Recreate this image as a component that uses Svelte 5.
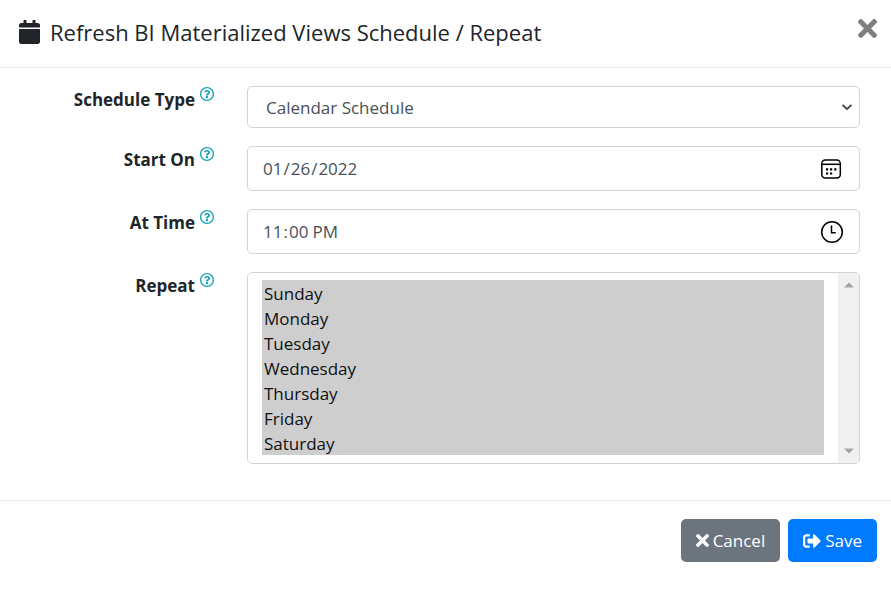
<script>
  const days = ['Sunday', 'Monday', 'Tuesday', 'Wednesday', 'Thursday', 'Friday', 'Saturday'];
  let scheduleType = $state('calendar');
  let startOn = $state('2022-01-26');
  let atTime = $state('23:00');
  let repeat = $state([...days]);
</script>

{#snippet help(topic)}
  <button type="button" class="help" aria-label={topic}>
    <svg viewBox="8 8 496 496" aria-hidden="true"><path d="M256 8C119.043 8 8 119.083 8 256c0 136.997 111.043 248 248 248s248-111.003 248-248C504 119.083 392.957 8 256 8zm0 448c-110.532 0-200-89.431-200-200 0-110.495 89.472-200 200-200 110.491 0 200 89.471 200 200 0 110.53-89.431 200-200 200zm107.244-255.2c0 67.052-72.421 68.084-72.421 92.863V300c0 6.627-5.373 12-12 12h-45.647c-6.627 0-12-5.373-12-12v-8.659c0-35.745 27.1-50.034 47.579-61.516 17.561-9.845 28.324-16.541 28.324-29.579 0-17.246-21.999-28.693-39.784-28.693-23.189 0-33.894 10.977-48.942 29.969-4.057 5.12-11.46 6.071-16.666 2.124l-27.824-21.098c-5.107-3.872-6.251-11.066-2.644-16.363C184.846 131.491 214.94 112 261.794 112c49.071 0 101.45 38.304 101.45 88.8zM298 368c0 23.159-18.841 42-42 42s-42-18.841-42-42 18.841-42 42-42 42 18.841 42 42z" /></svg>
  </button>
{/snippet}

{#snippet times()}
  <svg viewBox="0 80 352 352" aria-hidden="true"><path d="M242.72 256l100.07-100.07c12.28-12.28 12.28-32.19 0-44.48l-22.24-22.24c-12.28-12.28-32.19-12.28-44.48 0L176 189.28 75.93 89.21c-12.28-12.28-32.19-12.28-44.48 0L9.21 111.45c-12.28 12.28-12.28 32.19 0 44.48L109.28 256 9.21 356.07c-12.28 12.28-12.28 32.19 0 44.48l22.24 22.24c12.28 12.28 32.2 12.28 44.48 0L176 322.72l100.07 100.07c12.28 12.28 32.2 12.28 44.48 0l22.24-22.24c12.28-12.28 12.28-32.19 0-44.48L242.72 256z" /></svg>
{/snippet}

<form class="dialog" onsubmit={(e) => e.preventDefault()}>
  <header>
    <svg class="calendar" viewBox="0 0 448 512" aria-hidden="true"><path d="M12 192h424c6.6 0 12 5.4 12 12v260c0 26.5-21.5 48-48 48H48c-26.5 0-48-21.5-48-48V204c0-6.6 5.4-12 12-12zm436-44v-36c0-26.5-21.5-48-48-48h-48V12c0-6.6-5.4-12-12-12h-40c-6.6 0-12 5.4-12 12v52H160V12c0-6.6-5.4-12-12-12h-40c-6.6 0-12 5.4-12 12v52H48C21.5 64 0 85.5 0 112v36c0 6.6 5.4 12 12 12h424c6.6 0 12-5.4 12-12z" /></svg>
    <h1>Refresh BI Materialized Views Schedule / Repeat</h1>
    <button type="button" class="close" aria-label="Close">{@render times()}</button>
  </header>

  <div class="body">
    <div class="row">
      <div class="caption"><label for="type">Schedule Type</label>{@render help('About schedule type')}</div>
      <div class="field">
        <select id="type" class="control" bind:value={scheduleType}>
          <option value="calendar">Calendar Schedule</option>
        </select>
        <svg class="chevron" viewBox="0 0 12 8" aria-hidden="true"><path d="M1.5 2 6 6l4.500-4" /></svg>
      </div>
    </div>

    <div class="row">
      <div class="caption"><label for="start">Start On</label>{@render help('About start date')}</div>
      <div class="field">
        <input id="start" class="control" type="date" bind:value={startOn} />
        <svg class="picker" viewBox="0 0 24 24" aria-hidden="true">
          <rect x="1.800" y="3" width="18.500" height="18" rx="3.500" />
          <path d="M2 7.300h18" />
          <path class="dots" d="M6 11.300h2.200v2.200H6zM10 11.300h2.200v2.200H10zM14.200 11.300h2.200v2.200h-2.200zM6 15.400h2.200v2.200H6zM10 15.400h2.200v2.200H10z" />
        </svg>
      </div>
    </div>

    <div class="row">
      <div class="caption"><label for="time">At Time</label>{@render help('About time')}</div>
      <div class="field">
        <input id="time" class="control" type="time" bind:value={atTime} />
        <svg class="picker" viewBox="0 0 24 24" aria-hidden="true">
          <circle cx="12" cy="12" r="10.300" />
          <path d="M11.500 5.500v7.300h4.300" />
        </svg>
      </div>
    </div>

    <div class="row">
      <div class="caption"><label for="repeat">Repeat</label>{@render help('About repeat days')}</div>
      <div class="list">
        <select id="repeat" multiple size="7" bind:value={repeat}>
          {#each days as day}
            <option value={day}>{day}</option>
          {/each}
        </select>
        <div class="scrollbar" aria-hidden="true">
          <svg viewBox="0 0 10 6"><path d="M0 5.500 5 .5l5 5z" /></svg>
          <svg viewBox="0 0 10 6"><path d="M0 .5l5 5 5-5z" /></svg>
        </div>
      </div>
    </div>
  </div>

  <footer>
    <button type="button" class="btn cancel">{@render times()}Cancel</button>
    <button type="submit" class="btn save">
      <svg viewBox="0 0 512 512" aria-hidden="true"><path d="M497 273L329 441c-15 15-41 4.500-41-17v-96H152c-13.300 0-24-10.700-24-24v-96c0-13.300 10.700-24 24-24h136V88c0-21.400 25.900-32 41-17l168 168c9.300 9.400 9.300 24.600 0 34zM192 436v-40c0-6.600-5.400-12-12-12H96c-17.700 0-32-14.300-32-32V160c0-17.700 14.300-32 32-32h84c6.600 0 12-5.400 12-12V76c0-6.600-5.400-12-12-12H96c-53 0-96 43-96 96v192c0 53 43 96 96 96h84c6.600 0 12-5.400 12-12z" /></svg>Save
    </button>
  </footer>
</form>

<style>
  :global(body) {
    background: #fff;
  }
  .dialog,
  .dialog * {
    box-sizing: border-box;
  }
  .dialog {
    color: #212529;
    font-family: 'Segoe UI', 'Open Sans', 'Noto Sans', sans-serif;
    font-size: 17px;
    line-height: 27px;
  }
  svg {
    display: block;
    flex: none;
    fill: currentColor;
  }
  button,
  input,
  select {
    margin: 0;
    font: inherit;
  }
  header {
    display: flex;
    align-items: flex-start;
    padding: 16px 14px 18px 19px;
    border-bottom: 1px solid #e5e7e9;
  }
  .calendar {
    width: 21px;
    height: 24px;
    margin: 4px 10px 0 0;
  }
  h1 {
    flex: 1;
    margin: 0;
    font-size: 22px;
    font-weight: 500;
    line-height: 33px;
  }
  .close {
    padding: 3px 0;
    border: 0;
    background: none;
    color: #7f7f7f;
  }
  .close svg {
    width: 19px;
    height: 19px;
  }
  .body {
    display: flex;
    flex-direction: column;
    gap: 18px;
    padding: 18px 31px 36px 0;
  }
  .row {
    display: grid;
    grid-template-columns: 25% 1fr;
    column-gap: 32px;
  }
  .caption {
    display: flex;
    justify-content: flex-end;
    align-items: flex-start;
    gap: 5px;
    padding-right: 1px;
    font-weight: 700;
  }
  .help {
    padding: 1px 0;
    border: 0;
    background: none;
    color: #17a2b8;
  }
  .help svg {
    width: 14px;
    height: 14px;
  }
  .field {
    position: relative;
  }
  .control {
    display: block;
    width: 100%;
    height: 45px;
    padding: 0 14px;
    border: 1px solid #ced4da;
    border-radius: 5px;
    outline-color: #80bdff;
    background: #fff;
    color: #495057;
  }
  select.control {
    height: 42px;
    padding: 0 18px;
    appearance: none;
  }
  .control::-webkit-calendar-picker-indicator {
    opacity: 0;
  }
  .chevron,
  .picker {
    position: absolute;
    inset: 0 16px 0 auto;
    width: 24px;
    height: 24px;
    margin: auto 0;
    fill: none;
    stroke: #000;
    stroke-width: 1.5;
    pointer-events: none;
  }
  .chevron {
    right: 7px;
    width: 12px;
    height: 8px;
    stroke: #495057;
    stroke-width: 2;
  }
  .dots {
    fill: #000;
    stroke: none;
  }
  .list {
    display: flex;
    overflow: hidden;
    border: 1px solid #ced4da;
    border-radius: 5px;
  }
  .list select {
    flex: 1;
    min-width: 0;
    height: 190px;
    padding: 7px 14px;
    border: 0;
    outline: 0;
    overflow: hidden;
    background: #fff;
  }
  .list option {
    min-height: 25px;
    padding: 2px 2px 0;
    line-height: 23px;
    color: #101010;
  }
  .scrollbar {
    display: flex;
    flex-direction: column;
    justify-content: space-between;
    align-items: center;
    width: 21px;
    padding: 9px 0;
    background: #f0f0f0;
    color: #a3a3a3;
  }
  .scrollbar svg {
    width: 10px;
    height: 6px;
  }
  footer {
    display: flex;
    justify-content: flex-end;
    gap: 8px;
    padding: 18px 14px;
    border-top: 1px solid #e5e7e9;
  }
  .btn {
    display: flex;
    align-items: center;
    gap: 4px;
    height: 43px;
    padding: 0 15px;
    border: 0;
    border-radius: 5px;
    color: #fff;
  }
  .btn svg {
    width: 13px;
    height: 13px;
  }
  .cancel {
    background: #6c757d;
  }
  .save {
    background: #007bff;
  }
  .save svg {
    width: 18px;
    height: 18px;
  }
</style>
